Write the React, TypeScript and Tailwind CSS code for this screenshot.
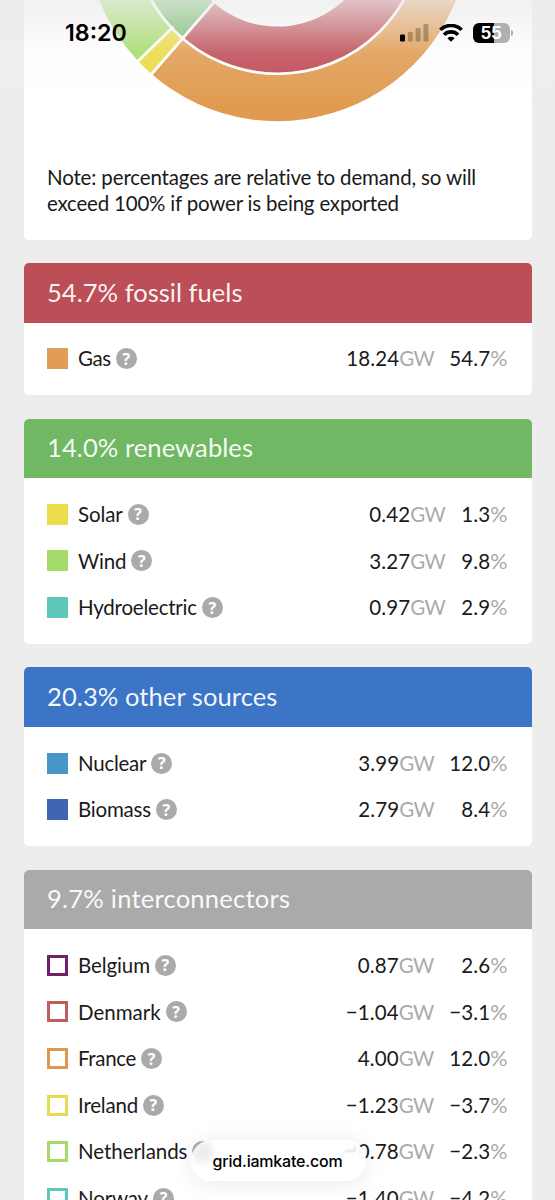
import React from "react";

interface Source {
    name: string;
    power: string;
    share: string;
    swatch: string;
    tracking?: string;
}

interface GroupProps {
    title: string;
    header: string;
    shareWidth: string;
    sources: Source[];
}

const fossils: Source[] = [
    {name: "Gas", power: "18.24", share: "54.7", swatch: "bg-[#e19c55]", tracking: "tracking-[-0.4px]"},
];

const renewables: Source[] = [
    {name: "Solar", power: "0.42", share: "1.3", swatch: "bg-[#ebdc4b]", tracking: "tracking-[-0.1px]"},
    {name: "Wind", power: "3.27", share: "9.8", swatch: "bg-[#a5dc69]", tracking: "tracking-[-0.2px]"},
    {name: "Hydroelectric", power: "0.97", share: "2.9", swatch: "bg-[#5fc8b9]"},
];

const others: Source[] = [
    {name: "Nuclear", power: "3.99", share: "12.0", swatch: "bg-[#4696c8]", tracking: "tracking-[-0.25px]"},
    {name: "Biomass", power: "2.79", share: "8.4", swatch: "bg-[#4164b4]"},
];

const interconnectors: Source[] = [
    {name: "Belgium", power: "0.87", share: "2.6", swatch: "border-3 border-[#731e6e]", tracking: "tracking-[-0.1px]"},
    {name: "Denmark", power: "−1.04", share: "−3.1", swatch: "border-3 border-[#be5f5f]", tracking: "tracking-[0px]"},
    {name: "France", power: "4.00", share: "12.0", swatch: "border-3 border-[#e19650]", tracking: "tracking-[-0.35px]"},
    {name: "Ireland", power: "−1.23", share: "−3.7", swatch: "border-3 border-[#e6dc50]"},
    {name: "Netherlands", power: "−0.78", share: "−2.3", swatch: "border-3 border-[#a5dc69]", tracking: "tracking-[-0.05px]"},
    {name: "Norway", power: "−1.40", share: "−4.2", swatch: "border-3 border-[#5fc8b9]", tracking: "tracking-[-0.15px]"},
];

function Group({title, header, shareWidth, sources}: GroupProps) {
    return (
        <section className="overflow-hidden rounded-[5px] bg-white">
            <h2 className={"flex h-[59.5px] items-center pb-[2px] pl-[23.5px] text-[25.6px] text-white/95 " + header}>{title}</h2>

            <ul className="py-[13px]">
                {sources.map((source) => (
                    <li key={source.name} className="flex h-[46.6px] items-center pl-[23.5px] pr-6">
                        <span className={"size-[21px] shrink-0 " + source.swatch}/>
                        <span className={"ml-[10px] " + (source.tracking ?? "tracking-[-0.21px]")}>{source.name}</span>
                        <button className="ml-[5px] flex size-[21px] items-center justify-center rounded-full bg-[#aaa] font-['Open_Sans',sans-serif] text-[16px] font-bold leading-none tracking-normal text-white">?</button>

                        <span className="ml-auto whitespace-nowrap tracking-[0.12px]">
                            {source.power}<span className="tracking-[-0.7px] text-[#aaa]">GW</span>
                        </span>
                        <span className={"whitespace-nowrap text-right tracking-[0.12px] " + shareWidth}>
                            {source.share}<span className="text-[21.5px] leading-none tracking-normal text-[#aaa]">%</span>
                        </span>
                    </li>
                ))}
            </ul>
        </section>
    )
}

function Chart() {
    return (
        <svg className="block h-[122px] w-full" viewBox="0 0 508 122">
            {/* centre of the rings is above the visible part */}
            <g transform="translate(253.5 -71)">
                <path d="M-139.5 132 A192 192 0 0 1 -192 0 L-146 0 A146 146 0 0 0 -106.5 100 Z" fill="#a5dc69"/>
                <path d="M-126 145 A192 192 0 0 1 -139.5 132 L-106.5 100 A146 146 0 0 0 -96 110 Z" fill="#ebdc41"/>
                <path d="M192 0 A192 192 0 0 1 -126 145 L-96 110 A146 146 0 0 0 146 0 Z" fill="#e19b50"/>
                <path d="M-94.5 109 A144 144 0 0 1 -144 0 L-97 0 A97 97 0 0 0 -64 73.5 Z" fill="#6eb964"/>
                <path d="M144 0 A144 144 0 0 1 -94.5 109 L-64 73.5 A97 97 0 0 0 97 0 Z" fill="#be4b55"/>
                <circle r="144.7" fill="none" stroke="#fff" strokeWidth="2.6"/>
                <path d="M-62 71.5 L-128 147.5 M-104 97.5 L-142 134.5" stroke="#fff" strokeWidth="2.8"/>
            </g>
        </svg>
    )
}

function StatusBar() {
    return (
        <div className="absolute inset-x-0 top-0 h-[108px] bg-linear-to-b from-[#ececec]/75 via-[#f4f4f4]/14 via-50% to-white/0 font-[Inter,sans-serif] text-black">
            <div className="flex h-[66px] items-center pl-[65px] pr-[42px]">
                <span className="text-[23.2px] font-semibold">18:20</span>

                <svg className="ml-auto h-[18px] w-[29px]" viewBox="0 0 29 18">
                    <rect x="0" y="10.5" width="5" height="7" rx="1.3"/>
                    <rect x="7.8" y="8" width="5" height="9.5" rx="1.3" opacity="0.25"/>
                    <rect x="15.6" y="4" width="5" height="13.5" rx="1.3" opacity="0.25"/>
                    <rect x="23.4" y="0" width="5" height="17.5" rx="1.3" opacity="0.25"/>
                </svg>

                <svg className="ml-[9.5px] h-[18px] w-6" viewBox="0 0 24 18" fill="none" stroke="#000" strokeWidth="3.6">
                    <path d="M1.3 5.8 A15.4 15.4 0 0 1 22.7 5.8"/>
                    <path d="M5 10.7 A10 10 0 0 1 19 10.7"/>
                    <path d="M8.4 14.2 A5.2 5.2 0 0 1 15.6 14.2 L12 17.8 Z" fill="#000" stroke="none"/>
                </svg>

                <div className="ml-[10px] flex items-center gap-[1.5px]">
                    <div className="flex h-[19.5px] w-[37px] items-center justify-center rounded-[6px] bg-linear-to-r from-black from-56% to-[#b0b0b0] to-56% text-[17px] font-bold leading-none tracking-[-0.3px] text-white">55</div>
                    <div className="h-[6px] w-[2px] rounded-r-full bg-[#b0b0b0]"/>
                </div>
            </div>
        </div>
    )
}

function App() {
    return (
        <div className="relative h-[1200px] overflow-hidden bg-[#ededed] font-[Lato,sans-serif] text-[20.5px] text-[#1a1a1a]">
            <main className="flex flex-col gap-[23.5px] px-[23.5px]">
                <section className="h-[239.5px] shrink-0 rounded-b-[5px] bg-white">
                    <Chart/>
                    <p className="mt-[42px] pl-[23.5px] leading-[26px] tracking-[-0.15px]">
                        Note: percentages are relative to demand, so will<br/>
                        <span className="tracking-[-0.2px]">exceed 100% if power is being exported</span>
                    </p>
                </section>

                <Group title="54.7% fossil fuels" header="bg-[#bb4e57]" shareWidth="w-[73.5px]" sources={fossils}/>
                <Group title="14.0% renewables" header="bg-[#70b863] tracking-[0.05px]" shareWidth="w-[62.5px]" sources={renewables}/>
                <Group title="20.3% other sources" header="bg-[#3c74c6] tracking-[0.05px]" shareWidth="w-[73.5px]" sources={others}/>
                <Group title="9.7% interconnectors" header="bg-[#aaa] tracking-[0.2px]" shareWidth="w-[74px]" sources={interconnectors}/>
            </main>

            <StatusBar/>

            <div className="absolute left-[191px] top-[1140px] flex h-[41px] w-[175px] items-center justify-center overflow-hidden rounded-full bg-white/97 font-[Inter,sans-serif] text-[16px] font-medium tracking-[-0.2px] text-black shadow-[0_2px_24px_rgba(0,0,0,0.09)]">
                <div className="absolute left-0.5 top-0.5 h-5 w-5 rounded-lg bg-[#ededed] blur-[3px]"/>
                <div className="absolute right-[10px] top-[5px] h-[7px] w-[11px] rounded-r-full border-b-2 border-r-2 border-[#e0e0e0] blur-[1px]"/>
                <span className="relative right-px">grid.iamkate.com</span>
            </div>
        </div>
    )
}

export default App;
